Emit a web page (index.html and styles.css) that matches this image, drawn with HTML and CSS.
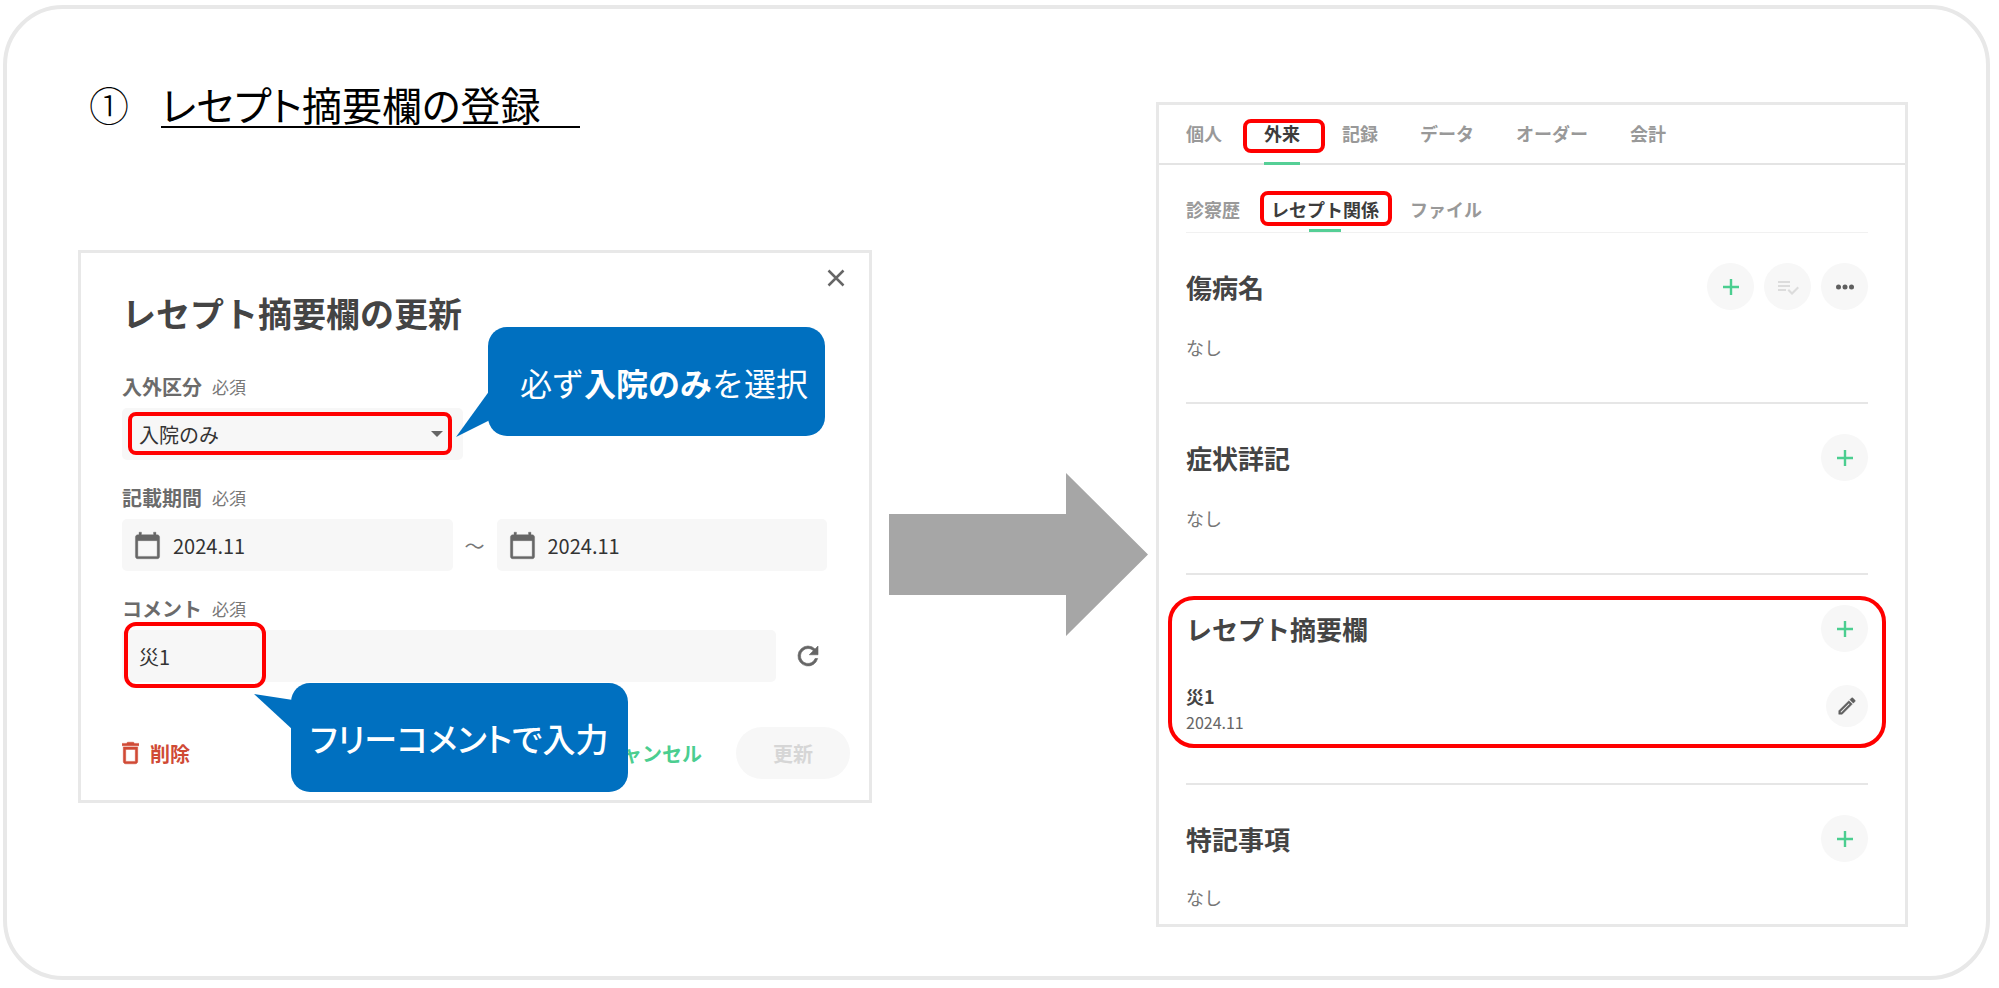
FILE: index.html
```html
<!DOCTYPE html>
<html lang="ja">
<head>
<meta charset="utf-8">
<title>レセプト摘要欄の登録</title>
<link rel="stylesheet" href="styles.css">
</head>
<body>
<svg class="sprite" aria-hidden="true">
  <symbol id="plus" viewBox="0 0 16 16"><path d="M8 0v16M0 8h16" fill="none" stroke="currentColor" stroke-width="2.400"/></symbol>
  <symbol id="calendar" viewBox="0 0 24 24"><path d="M20 3h-1V1h-2v2H7V1H5v2H4c-1.1 0-2 .9-2 2v16c0 1.1.9 2 2 2h16c1.1 0 2-.9 2-2V5c0-1.1-.9-2-2-2zm0 18H4V8h16v13z" fill="currentColor" stroke="currentColor" stroke-width=".3"/></symbol>
</svg>
<main class="slide">
  <div class="left">
    <h1 class="step"><span class="step-no">①</span><span class="step-title">レセプト摘要欄の登録　</span></h1>

    <section class="dialog">
      <button class="close" type="button" aria-label="閉じる">
        <svg width="18" height="18" viewBox="0 0 18 18"><path d="M1.5 1.5l15 15M16.500 1.500l-15 15" fill="none" stroke="currentColor" stroke-width="2.500"/></svg>
      </button>
      <h2 class="dialog-title">レセプト摘要欄の更新</h2>
      <form class="form">
        <div class="group">
          <div class="label"><label for="kubun">入外区分</label><span class="required">必須</span></div>
          <div class="field select-field">
            <select id="kubun"><option>入院のみ</option></select>
            <svg class="caret" width="12" height="6" viewBox="0 0 12 6"><path d="M0 0h12L6 6z" fill="currentColor"/></svg>
            <span class="mark mark-select"></span>
          </div>
        </div>
        <div class="group">
          <div class="label"><label for="from">記載期間</label><span class="required">必須</span></div>
          <div class="range">
            <div class="field date-field"><svg width="29" height="29"><use href="#calendar"/></svg><input id="from" type="text" value="2024.11"></div>
            <span class="tilde">～</span>
            <div class="field date-field"><svg width="29" height="29"><use href="#calendar"/></svg><input type="text" value="2024.11" aria-label="記載期間の終了"></div>
          </div>
        </div>
        <div class="group">
          <div class="label"><label for="comment">コメント</label><span class="required">必須</span></div>
          <div class="comment-row">
            <div class="field comment-field"><input id="comment" type="text" value="災1"><span class="mark mark-comment"></span></div>
            <button class="refresh" type="button" aria-label="リセット"><svg width="30" height="30" viewBox="0 0 24 24"><path d="M17.650 6.350A7.958 7.958 0 0 0 12 4a8 8 0 1 0 7.730 10h-2.080A6 6 0 1 1 12 6c1.660 0 3.140.69 4.220 1.780L13 11h7V4l-2.350 2.350z" fill="currentColor" stroke="currentColor" stroke-width=".5"/></svg></button>
          </div>
        </div>
      </form>
      <div class="actions">
        <button class="delete" type="button"><svg width="17" height="24" viewBox="5 2 14 20"><path d="M6 19c0 1.100.9 2 2 2h8c1.100 0 2-.9 2-2V7H6v12zM8 9h8v10H8V9zm7.500-5l-1-1h-5l-1 1H5v2h14V4z" fill="currentColor" stroke="currentColor" stroke-width=".4"/></svg>削除</button>
        <button class="cancel" type="button">キャンセル</button>
        <button class="update" type="button" disabled>更新</button>
      </div>

      <div class="callout callout-select">
        <svg class="tail" width="34" height="48" viewBox="0 0 34 48"><path d="M34 0L0 47l34-17z" fill="currentColor"/></svg>
        <p>必ず<b>入院のみ</b>を選択</p>
      </div>
      <div class="callout callout-comment">
        <svg class="tail" width="39" height="36" viewBox="0 0 39 36"><path d="M39 6L0 0l39 36z" fill="currentColor"/></svg>
        <p>フリーコメントで入力</p>
      </div>
    </section>
  </div>

  <div class="arrow"><svg viewBox="0 0 259 163"><path d="M0 41h177V0l82 81.500L177 163v-41H0z" fill="#a6a6a6"/></svg></div>

  <section class="record">
    <nav class="tabs">
      <button class="tab" type="button">個人</button>
      <button class="tab active" type="button">外来<span class="mark mark-tab"></span></button>
      <button class="tab" type="button">記録</button>
      <button class="tab" type="button">データ</button>
      <button class="tab" type="button">オーダー</button>
      <button class="tab" type="button">会計</button>
    </nav>
    <nav class="subtabs">
      <button class="tab" type="button">診察歴</button>
      <button class="tab active" type="button">レセプト関係<span class="mark mark-subtab"></span></button>
      <button class="tab" type="button">ファイル</button>
    </nav>

    <section class="block">
      <header><h3>傷病名</h3>
        <div class="tools">
          <button class="round" type="button" aria-label="追加"><svg width="16" height="16"><use href="#plus"/></svg></button>
          <button class="round muted" type="button" aria-label="一括選択"><svg width="24" height="24" viewBox="0 0 24 24"><path d="M14 10H2v2h12v-2zm0-4H2v2h12V6zM2 16h8v-2H2v2zm19.500-4.500L23 13l-6.990 7-4.510-4.500L13 14l3.010 3 5.490-5.500z" fill="currentColor"/></svg></button>
          <button class="round dark" type="button" aria-label="その他"><svg width="18" height="6" viewBox="0 0 18 6"><g fill="currentColor"><circle cx="2.500" cy="3" r="2.500"/><circle cx="9" cy="3" r="2.500"/><circle cx="15.500" cy="3" r="2.500"/></g></svg></button>
        </div>
      </header>
      <p class="none">なし</p>
    </section>

    <section class="block">
      <header><h3>症状詳記</h3><button class="round" type="button" aria-label="追加"><svg width="16" height="16"><use href="#plus"/></svg></button></header>
      <p class="none">なし</p>
    </section>

    <section class="block">
      <header><h3>レセプト摘要欄</h3><button class="round" type="button" aria-label="追加"><svg width="16" height="16"><use href="#plus"/></svg></button></header>
      <div class="item">
        <div><p class="item-name">災1</p><p class="item-date">2024.11</p></div>
        <button class="round small dark" type="button" aria-label="編集"><svg width="22" height="22" viewBox="0 0 24 24"><path d="M14.060 9.020l.92.92L5.920 19H5v-.92l9.060-9.060M17.660 3c-.25 0-.51.1-.7.29l-1.830 1.830 3.750 3.750 1.830-1.830c.39-.39.39-1.020 0-1.410l-2.340-2.340c-.2-.2-.45-.29-.71-.29zm-3.600 3.190L3 17.250V21h3.750L17.810 9.940l-3.750-3.750z" fill="currentColor" stroke="currentColor" stroke-width=".5"/></svg></button>
      </div>
      <span class="mark mark-block"></span>
    </section>

    <section class="block">
      <header><h3>特記事項</h3><button class="round" type="button" aria-label="追加"><svg width="16" height="16"><use href="#plus"/></svg></button></header>
      <p class="none">なし</p>
    </section>
  </section>
</main>
</body>
</html>
```

FILE: styles.css
```css
* { box-sizing: border-box; }
body, h1, h2, h3, p { margin: 0; }
body {
  background: #fff;
  color: #444;
  font-family: "Noto Sans CJK JP", "Liberation Sans", sans-serif;
}
button, input, select {
  margin: 0;
  padding: 0;
  border: 0;
  background: none;
  color: inherit;
  font: inherit;
}
svg { display: block; flex: none; }
.sprite { position: absolute; width: 0; height: 0; }

/* Slide frame */
.slide {
  display: grid;
  grid-template-columns: minmax(0, 794fr) minmax(0, 284fr) minmax(0, 752fr);
  align-items: start;
  margin: 5px 9px 8px 3px;
  padding: 68px 78px 49px 71px;
  border: 4px solid #e8e8e8;
  border-radius: 60px;
}
.step {
  display: flex;
  gap: 32px;
  margin-bottom: 122px;
  padding: 6px 0 0 11px;
  color: #000;
  font-size: 40px;
  font-weight: 400;
  line-height: 43px;
  font-feature-settings: "palt";
}
.step-no { font-weight: 300; }
.step-title { border-bottom: 2px solid #000; white-space: pre; }
.arrow { margin-top: 396px; padding: 0 8px 0 17px; }
.arrow svg { width: 100%; }

/* Red highlight frames */
.mark {
  position: absolute;
  border: 4px solid #f00;
  border-radius: 8px;
  pointer-events: none;
}
.mark-select { inset: 4px 11px 5px 6px; }
.mark-comment { left: 2px; top: -8px; width: 142px; height: 66px; border-radius: 12px; }
.mark-tab { inset: 14px -25px 10px -21px; }
.mark-subtab { inset: 26px -13px 6px -11px; }
.mark-block { inset: 21px -18px 35px -18px; border-radius: 26px; }

/* Update dialog */
.dialog {
  position: relative;
  padding: 35px 0 21px;
  border: 3px solid #e8e8e8;
}
.close { position: absolute; top: 16px; right: 24px; color: #666; }
.dialog-title {
  margin-bottom: 35px;
  padding-left: 41px;
  font-size: 34px;
  font-weight: 700;
  line-height: 50px;
}
.form {
  display: grid;
  gap: 24px;
  padding: 0 42px 0 41px;
}
.label {
  display: flex;
  align-items: center;
  gap: 10px;
  height: 27px;
  margin-bottom: 8px;
  color: #6b6b6b;
  font-size: 20px;
  font-weight: 700;
}
.required { color: #777; font-size: 17px; font-weight: 400; }
.field {
  position: relative;
  display: flex;
  align-items: center;
  height: 52px;
  border-radius: 5px;
  background: #f7f7f7;
  color: #333;
  font-size: 20px;
}
.field input, .field select { flex: 1; min-width: 0; height: 100%; appearance: none; }
.select-field { max-width: 341px; padding-left: 17px; }
.caret { position: absolute; right: 20px; top: 23px; color: #666; }
.range { display: flex; align-items: center; }
.date-field { flex: 1; gap: 11px; padding-left: 11px; }
.date-field svg { color: #666; }
.tilde { width: 44px; color: #777; font-size: 20px; text-align: center; }
.comment-row { display: flex; align-items: center; gap: 15px; }
.comment-field { flex: 1; padding-left: 17px; }
.refresh { display: grid; place-items: center; width: 34px; height: 36px; margin-right: 2px; color: #666; }
.actions {
  display: flex;
  align-items: center;
  margin-top: 45px;
  padding: 0 19px 0 41px;
  font-size: 20px;
  font-weight: 700;
}
.delete { display: flex; align-items: center; gap: 11px; margin-right: auto; color: #d04a35; }
.cancel { margin-right: 34px; color: #4bce90; }
.update {
  width: 114px;
  height: 52px;
  border-radius: 26px;
  background: #f7f7f7;
  color: #d6d6d6;
}

/* Blue speech balloons */
.callout {
  position: absolute;
  display: flex;
  align-items: center;
  width: 337px;
  height: 109px;
  border-radius: 19px;
  background: #0070c0;
  color: #fff;
  font-size: 32px;
  white-space: nowrap;
}
.callout .tail { position: absolute; color: #0070c0; }
.callout-select { left: 407px; top: 74px; padding-left: 32px; }
.callout-select .tail { left: -32px; top: 63px; }
.callout-comment {
  left: 210px;
  top: 430px;
  padding-left: 19px;
  font-size: 33px;
  font-weight: 500;
  font-feature-settings: "palt";
}
.callout-comment .tail { left: -37px; top: 11px; }

/* Patient record panel */
.record { margin-top: 25px; border: 3px solid #e8e8e8; }
.tabs, .subtabs { display: flex; font-size: 18px; font-weight: 700; }
.tabs { gap: 42px; height: 60px; padding-left: 27px; border-bottom: 2px solid #e4e4e4; }
.subtabs { gap: 31px; height: 68px; margin: 0 37px 0 27px; border-bottom: 1px solid #f1f1f1; }
.tab { position: relative; height: 58px; padding-bottom: 2px; color: #999; line-height: 28px; }
.tab.active { color: #3c3c3c; }
.tab.active::after {
  content: "";
  position: absolute;
  left: 0;
  right: 0;
  bottom: -2px;
  height: 3px;
  background: #55cf96;
}
.subtabs .tab { height: 67px; padding: 21px 0 0; }
.subtabs .tab.active::after { left: 38px; right: 38px; bottom: 0; }

.block {
  position: relative;
  margin: 0 37px 0 27px;
  padding: 30px 0 42px;
  border-bottom: 2px solid #e6e6e6;
}
.block:last-child { padding-bottom: 14px; border-bottom: 0; }
.block header { display: flex; align-items: center; justify-content: space-between; height: 47px; }
.block h3 { font-size: 26px; font-weight: 700; line-height: 40px; }
.tools { display: flex; gap: 10px; }
.round {
  display: grid;
  place-items: center;
  width: 47px;
  height: 47px;
  border-radius: 50%;
  background: #f7f7f7;
  color: #4bce90;
}
.round.small { width: 42px; height: 42px; margin-top: 2px; }
.round.muted { color: #dcdcdc; }
.round.dark { color: #5f5f5f; }
.none { margin-top: 24px; color: #777; font-size: 18px; line-height: 26px; }
.block:last-child .none { margin-top: 22px; }
.item { display: flex; justify-content: space-between; margin-top: 24px; padding: 7px 0 6px; line-height: 26px; }
.item-name { font-size: 18px; font-weight: 700; }
.item-date { color: #666; font-size: 16px; }
```
